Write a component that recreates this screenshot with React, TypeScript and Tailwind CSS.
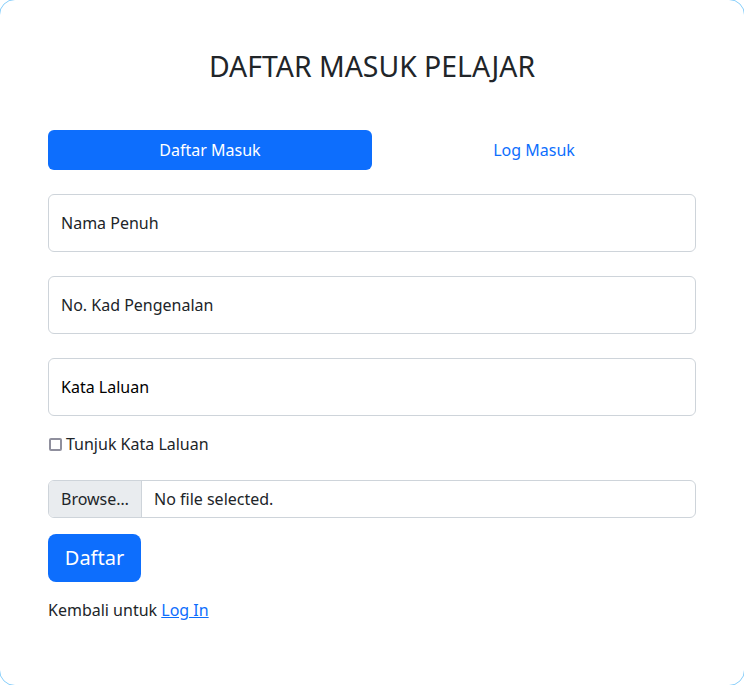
export default function App() {
  return (
    <div className="w-[744px] h-[685px] overflow-hidden bg-white" style={{ fontFamily: '"Noto Sans", sans-serif' }}>
      {/* card, border sits just outside the window so only the corners show */}
      <div className="-ml-px -mt-px w-[746px] h-[687px] rounded-[16px] border border-[#87cefa] bg-white px-12 pt-[49px] text-[#212529]">
        <h2 className="text-center text-[28.4px] leading-[1.2] font-normal">DAFTAR MASUK PELAJAR</h2>

        {/* Tabs */}
        <div className="mt-[47px] grid grid-cols-2">
          <button className="h-10 rounded-md bg-[#0d6efd] text-base text-white">Daftar Masuk</button>
          <button className="h-10 rounded-md text-base text-[#0d6efd]">Log Masuk</button>
        </div>

        {/* Form */}
        <div className="mt-6 space-y-6">
          <div className="flex h-[58px] items-center rounded-md border border-[#ced4da] px-3 text-base">Nama Penuh</div>
          <div className="flex h-[58px] items-center rounded-md border border-[#ced4da] px-3 text-base">No. Kad Pengenalan</div>
          <div className="flex h-[58px] items-center rounded-md border border-[#ced4da] px-3 text-base text-black">Kata Laluan</div>
        </div>

        <label className="mt-4 flex h-6 items-center text-base">
          <span className="ml-px mr-1 inline-block h-[13px] w-[13px] rounded-[2px] border-2 border-[#8f8f9d] bg-white"></span>
          Tunjuk Kata Laluan
        </label>

        <div className="mt-6 flex h-[38px] overflow-hidden rounded-md border border-[#ced4da] text-base">
          <span className="flex w-[93px] items-center border-r border-[#ced4da] bg-[#e9ecef] px-3">Browse…</span>
          <span className="flex items-center px-3">No file selected.</span>
        </div>

        <button className="mt-4 h-12 w-[93px] rounded-lg bg-[#0d6efd] text-xl text-white">Daftar</button>

        <p className="mt-4 text-base leading-6">
          Kembali untuk <a className="text-[#0d6efd] underline" href="#">Log In</a>
        </p>
      </div>
    </div>
  )
}
